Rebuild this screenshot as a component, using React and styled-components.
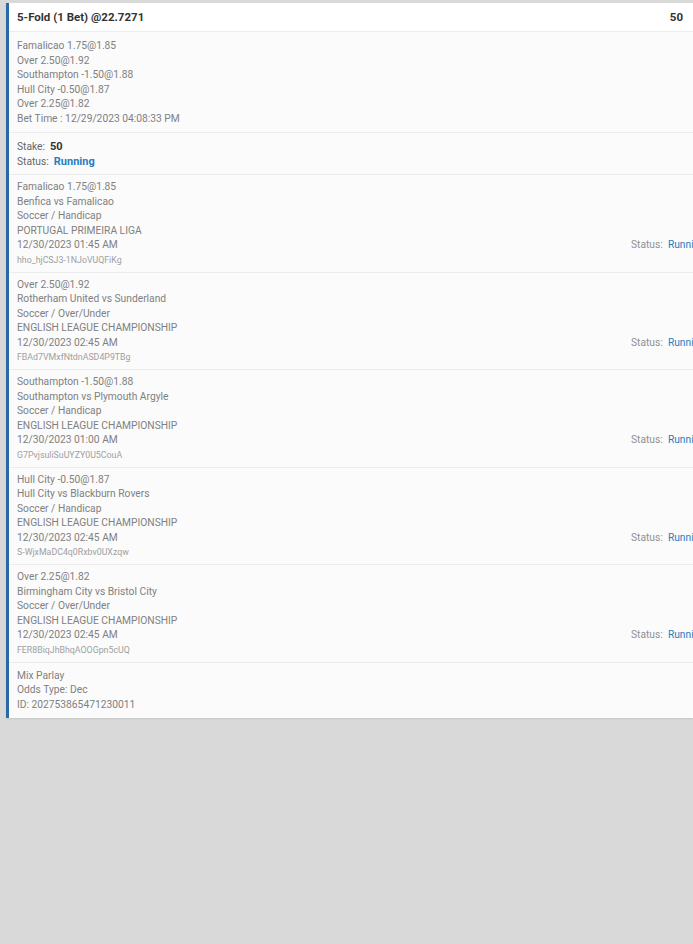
import styled, { createGlobalStyle } from "styled-components";

const GlobalStyle = createGlobalStyle`
html, body {
  margin:0;
  padding:0;
  background:#d9d9d9;
  overflow-x:hidden;
  font-family:Roboto, "Liberation Sans", sans-serif;
}
body {
  min-height:944px;
}
`

const Page = styled.div`
padding:3px 0 0 6px;
`

const Card = styled.div`
background-color:#fbfbfb;
border-left:3px solid #2b6aa6;
box-shadow:0 1px 2px rgba(0,0,0,0.08);
`

const Header = styled.div`
display:flex;
justify-content:space-between;
align-items:center;
height:28px;
padding:0 10px 0 8px;
background:#fff;
border-bottom:1px solid #ececec;
font-size:11.5px;
font-weight:700;
color:#333;
`

const Section = styled.div`
padding:${p => p.$pad || "6px 8px"};
border-bottom:${p => (p.$last ? "none" : "1px solid #ececec")};
`

const Line = styled.div`
font-size:10.25px;
line-height:14.5px;
height:14.5px;
color:#808080;
white-space:nowrap;
`

const SmallLine = styled.div`
font-size:8.8px;
line-height:14px;
color:#a0a0a0;
white-space:nowrap;
`

const Label = styled.span`
color:#666;
margin-right:5px;
`

const Stake = styled.span`
font-size:11px;
font-weight:700;
color:#333;
`

const Running = styled.span`
color:#2a7cc2;
font-size:${p => (p.$big ? "11px" : "10.25px")};
font-weight:${p => (p.$big ? 700 : 400)};
`

const LegRow = styled.div`
display:flex;
justify-content:space-between;
align-items:flex-end;
`

const LegStatus = styled.div`
width:62px;
flex-shrink:0;
margin-bottom:14px;
font-size:10.25px;
line-height:14.5px;
color:#909090;
white-space:nowrap;
`

const summary = [
  "Famalicao 1.75@1.85",
  "Over 2.50@1.92",
  "Southampton -1.50@1.88",
  "Hull City -0.50@1.87",
  "Over 2.25@1.82",
  "Bet Time : 12/29/2023 04:08:33 PM",
];

const legs = [
  {
    pick: "Famalicao 1.75@1.85",
    match: "Benfica vs Famalicao",
    market: "Soccer / Handicap",
    league: "PORTUGAL PRIMEIRA LIGA",
    time: "12/30/2023 01:45 AM",
    id: "hho_hjCSJ3-1NJoVUQFiKg",
  },
  {
    pick: "Over 2.50@1.92",
    match: "Rotherham United vs Sunderland",
    market: "Soccer / Over/Under",
    league: "ENGLISH LEAGUE CHAMPIONSHIP",
    time: "12/30/2023 02:45 AM",
    id: "FBAd7VMxfNtdnASD4P9TBg",
  },
  {
    pick: "Southampton -1.50@1.88",
    match: "Southampton vs Plymouth Argyle",
    market: "Soccer / Handicap",
    league: "ENGLISH LEAGUE CHAMPIONSHIP",
    time: "12/30/2023 01:00 AM",
    id: "G7PvjsuliSuUYZY0U5CouA",
  },
  {
    pick: "Hull City -0.50@1.87",
    match: "Hull City vs Blackburn Rovers",
    market: "Soccer / Handicap",
    league: "ENGLISH LEAGUE CHAMPIONSHIP",
    time: "12/30/2023 02:45 AM",
    id: "S-WjxMaDC4q0Rxbv0UXzqw",
  },
  {
    pick: "Over 2.25@1.82",
    match: "Birmingham City vs Bristol City",
    market: "Soccer / Over/Under",
    league: "ENGLISH LEAGUE CHAMPIONSHIP",
    time: "12/30/2023 02:45 AM",
    id: "FER8BiqJhBhqAOOGpn5cUQ",
  },
];

export default function App() {
  return (
    <Page>
      <GlobalStyle />
      <Card>
        <Header>
          <span>5-Fold (1 Bet) @22.7271</span>
          <span>50</span>
        </Header>
        <Section $pad="7px 8px 6px">
          {summary.map(s => <Line key={s}>{s}</Line>)}
        </Section>
        <Section $pad="7px 8px 5px">
          <Line><Label>Stake:</Label><Stake>50</Stake></Line>
          <Line><Label>Status:</Label><Running $big>Running</Running></Line>
        </Section>
        {legs.map(l => (
          <Section key={l.id} $pad="5px 0 5px 8px">
            <LegRow>
              <div>
                <Line>{l.pick}</Line>
                <Line>{l.match}</Line>
                <Line>{l.market}</Line>
                <Line>{l.league}</Line>
                <Line>{l.time}</Line>
                <SmallLine>{l.id}</SmallLine>
              </div>
              <LegStatus>
                Status:&nbsp; <Running>Running</Running>
              </LegStatus>
            </LegRow>
          </Section>
        ))}
        <Section $pad="6px 8px 6px" $last>
          <Line>Mix Parlay</Line>
          <Line>Odds Type: Dec</Line>
          <Line>ID: 202753865471230011</Line>
        </Section>
      </Card>
    </Page>
  );
}
